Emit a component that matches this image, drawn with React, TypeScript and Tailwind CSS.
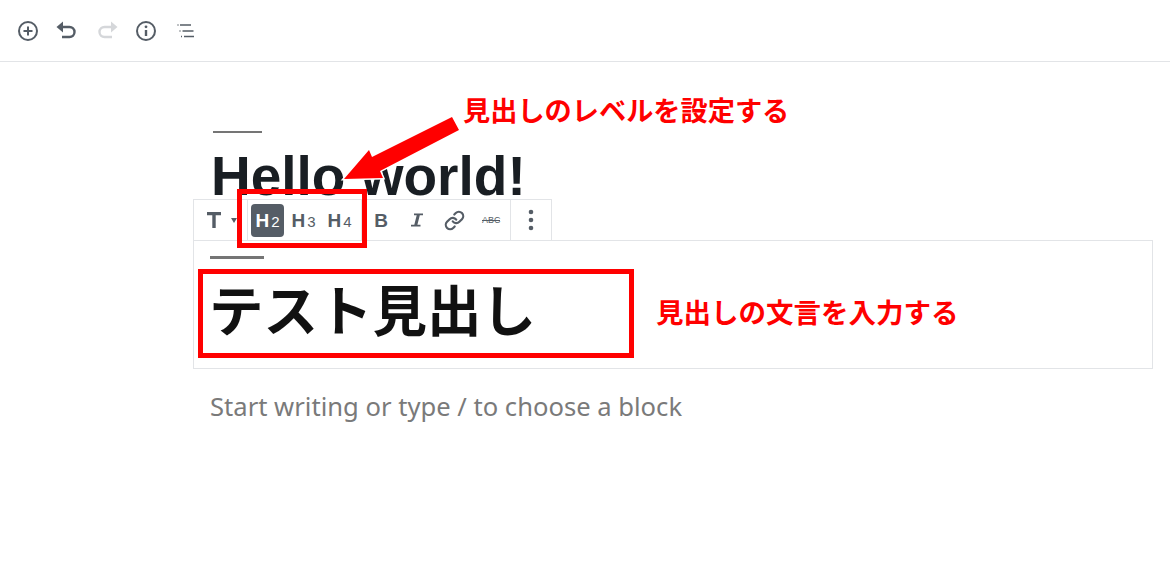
import { Link } from "lucide-react";

const G = "#555d66";

function Divider() {
  return <div className="w-px self-stretch bg-[#e2e4e7]" />;
}

function H({ n, active }: { n: string; active?: boolean }) {
  return (
    <div className={`flex h-[33px] w-[33px] items-baseline justify-center rounded-[4px] pt-[6px] font-['Liberation_Sans',sans-serif] ${active ? "bg-[#555d66] text-white" : "text-[#555d66]"}`}>
      <span className="text-[19px] leading-[22px] font-bold">H</span>
      <span className="ml-[2px] text-[15px] leading-[22px]">{n}</span>
    </div>
  );
}

function TopBar() {
  return (
    <div className="flex h-[62px] items-center gap-[15.4px] border-b border-[#e2e4e7] pl-[16px]">
      <svg width="24" height="24" viewBox="0 0 24 24" fill="none" stroke={G} strokeWidth="2"><circle cx="12" cy="12" r="9" /><path d="M12 7.500v9M7.500 12h9" /></svg>
      <svg width="24" height="24" viewBox="0 0 24 24" fill="none" stroke={G} strokeWidth="2.400"><path d="M7 8h7.500a5 5 0 0 1 0 10H7" /><path d="M8 2.500v11L1.500 8z" fill={G} stroke="none" /></svg>
      <svg width="24" height="24" viewBox="0 0 24 24" fill="none" stroke="#d5d7da" strokeWidth="2.400"><path d="M17 8H9.500a5 5 0 0 0 0 10H17" /><path d="M16 2.500v11L22.500 8z" fill="#d5d7da" stroke="none" /></svg>
      <svg width="24" height="24" viewBox="0 0 24 24" fill="none" stroke={G} strokeWidth="2"><circle cx="12" cy="12" r="9" /><path d="M12 11v6" strokeWidth="2.400" /><circle cx="12" cy="7.800" r="1.400" fill={G} stroke="none" /></svg>
      <svg width="24" height="24" viewBox="0 0 24 24" fill="none" stroke={G} strokeWidth="1.700"><path d="M6 6h11M8.500 12h11M10 17.500h10" /><path d="M3.500 6h1M5.500 12h1M7 17.500h1" /></svg>
    </div>
  );
}

function Toolbar() {
  return (
    <div className="flex h-[42px] w-[359px] items-center border border-[#e2e4e7] bg-white">
      <div className="flex w-[53px] items-center pl-[12px]">
        <svg width="16" height="18" viewBox="0 0 16 18" fill={G}><path d="M1 1h14v3.200h-5.300V17H6.300V4.200H1z" /></svg>
        <svg className="ml-[9px]" width="6" height="5" viewBox="0 0 6 5" fill={G}><path d="M0 0h6L3 5z" /></svg>
      </div>
      <Divider />
      <div className="flex w-[113px] items-center gap-[3px] pl-[3px]">
        <H n="2" active />
        <H n="3" />
        <H n="4" />
      </div>
      <Divider />
      <div className="flex w-[148px] items-center">
        <span className="ml-[9px] w-[20px] text-center font-['Liberation_Sans',sans-serif] text-[19px] leading-none font-bold text-[#555d66]">B</span>
        <svg className="ml-[19px]" width="14" height="16" viewBox="0 0 14 16" fill={G}><path d="M4 1.500h9v1.800h-3.200L7.400 12.700H10.500v1.800H1v-1.800h3.300L6.700 3.300H4z" /></svg>
        <Link className="ml-[20px]" size={21} strokeWidth={2.500} color={G} />
        <span className="relative ml-[17px] w-[18px] font-['Liberation_Sans',sans-serif] text-[9px] leading-none text-[#555d66]">
          ABC
          <span className="absolute top-[4px] left-0 h-px w-[18px] bg-[#555d66]" />
        </span>
      </div>
      <Divider />
      <div className="flex flex-1 items-center justify-center">
        <svg width="6" height="22" viewBox="0 0 6 22" fill={G}><circle cx="3" cy="3" r="2.300" /><circle cx="3" cy="11" r="2.300" /><circle cx="3" cy="19" r="2.300" /></svg>
      </div>
    </div>
  );
}

export default function App() {
  const jp = "font-['Noto_Sans_CJK_JP',sans-serif]";
  return (
    <div className="relative h-[562px] w-[1170px] overflow-hidden bg-white font-['Noto_Sans',sans-serif]">
      <TopBar />
      <div className="ml-[193px] w-[960px]">
        <div className="ml-[20px] mt-[69px] h-[2px] w-[49px] bg-[#757575]" />
        <h1 className="ml-[18px] mt-[8px] h-[58px] font-['Liberation_Sans',sans-serif] text-[55px] leading-[70px] font-bold text-[#191e23]">Hello world!</h1>
        <div className="relative z-10 -mb-px">
          <Toolbar />
        </div>
        <div className="h-[129px] border border-[#e2e4e7] pl-[15px] pt-[15px]">
          <div className="ml-[1px] h-[3px] w-[54px] bg-[#757575]" />
          <h2 className={`mt-[12px] text-[54.500px] leading-[74px] font-bold text-[#111] ${jp}`}>テスト見出し</h2>
        </div>
        <p className="ml-[17px] mt-[20px] text-[25.6px] leading-[36px] text-[#7a7a7a]">Start writing or type / to choose a block</p>
      </div>

      <div className="absolute top-[189px] left-[237px] z-20 h-[59px] w-[130px] border-[5px] border-[#f00]" />
      <div className="absolute top-[269px] left-[198px] z-20 h-[89px] w-[436px] border-[5px] border-[#f00]" />
      <svg className="absolute top-[110px] left-[340px] z-20" width="125" height="75" viewBox="0 0 125 75" fill="#f00">
        <path d="M112 7l7 13-79 41 3 7-39 1 25-29 3 7z" stroke="#fff" strokeWidth="3" />
        <path d="M112 7l7 13-79 41 3 7-39 1 25-29 3 7z" />
      </svg>
      <span className={`absolute top-[90px] left-[463px] z-20 text-[27.200px] leading-[38px] font-bold text-[#f00] ${jp}`}>見出しのレベルを設定する</span>
      <span className={`absolute top-[292px] left-[656px] z-20 text-[27.500px] leading-[38px] font-bold text-[#f00] ${jp}`}>見出しの文言を入力する</span>
    </div>
  );
}
